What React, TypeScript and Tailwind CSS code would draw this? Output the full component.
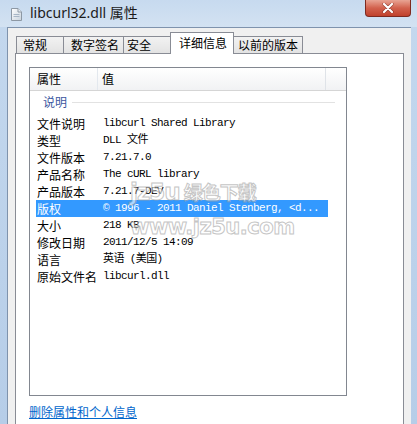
import React from "react";

const cjk = "font-['Noto_Sans_CJK_SC','Noto_Sans',sans-serif]";
const mono = "font-['Liberation_Mono','Noto_Sans_CJK_SC',monospace]";

const rows: { label: string; value: string }[] = [
  { label: "文件说明", value: "libcurl Shared Library" },
  { label: "类型", value: "DLL 文件" },
  { label: "文件版本", value: "7.21.7.0" },
  { label: "产品名称", value: "The cURL library" },
  { label: "产品版本", value: "7.21.7-DEV" },
  { label: "版权", value: "© 1996 - 2011 Daniel Stenberg, <d..." },
  { label: "大小", value: "218 KB" },
  { label: "修改日期", value: "2011/12/5 14:09" },
  { label: "语言", value: "英语 (美国)" },
  { label: "原始文件名", value: "libcurl.dll" },
];

const tabs = [
  { label: "常规", w: "w-[48px]", pl: "pl-[6px]" },
  { label: "数字签名", w: "w-[61px]", pl: "pl-[7px]" },
  { label: "安全", w: "w-[48px]", pl: "pl-[3px]" },
  { label: "详细信息", w: "w-[64px]", pl: "pl-[8px]", active: true },
  { label: "以前的版本", w: "w-[70px]", pl: "pl-[4px]" },
];

function FileIcon() {
  return (
    <svg width="11" height="13" viewBox="0 0 11 13">
      <defs>
        <linearGradient id="pg" x1="0" y1="0" x2="1" y2="1">
          <stop offset="0" stopColor="#ffffff" />
          <stop offset="1" stopColor="#c9d3dd" />
        </linearGradient>
      </defs>
      <path d="M0.5 0.5 H7 L10.5 4 V12.5 H0.5 Z" fill="url(#pg)" stroke="#8d98a4" />
      <path d="M7 0.5 V4 H10.5" fill="#e8edf2" stroke="#8d98a4" />
      <rect x="2.5" y="6" width="6" height="1" fill="#a8b6c6" />
      <rect x="2.5" y="8" width="6" height="1" fill="#a8b6c6" />
    </svg>
  );
}

export default function App() {
  return (
    <div className="relative w-[417px] h-[424px] overflow-hidden bg-gradient-to-b from-[#c4d8ee] to-[#b6cde8]">
      {/* Title bar */}
      <div className="flex items-start h-[27px] bg-gradient-to-b from-[#c7daef] to-[#d3e2f2]">
        <div className="ml-[11px] mt-[8px]">
          <FileIcon />
        </div>
        <div className="ml-[8px] mt-[3px] text-[14px] leading-[20px] text-[#1b1b1b] font-['Noto_Sans','Noto_Sans_CJK_SC',sans-serif]">
          libcurl32.dll 属性
        </div>
        <div className="ml-auto mr-[6px] w-[46px] h-[17px] rounded-b-[4px] border border-t-0 border-[#7d2a20] bg-gradient-to-b from-[#e8a494] via-[#d2614d] to-[#c0412c] flex items-center justify-center">
          <svg width="12" height="10" viewBox="0 0 12 10">
            <path d="M2 1 L10 9 M10 1 L2 9" stroke="#5a1810" strokeWidth="3.4" strokeLinecap="round" opacity="0.5" />
            <path d="M2 1 L10 9 M10 1 L2 9" stroke="#ffffff" strokeWidth="2.2" strokeLinecap="round" />
          </svg>
        </div>
      </div>

      {/* Client area */}
      <div className="ml-[7px] mr-[6px] h-[397px] border-l border-t border-[#7f93ad] bg-[#f0f0f0]">
        {/* Tabs */}
        <div className={`flex items-end h-[25px] pl-[8px] ${cjk} text-[12px] text-black`}>
          {tabs.map((t) =>
            t.active ? (
              <div
                key={t.label}
                className={`${t.w} ${t.pl} -ml-[1px] h-[22px] -mb-[1px] relative z-10 border border-b-0 border-[#898c95] bg-white leading-[19px]`}
              >
                {t.label}
              </div>
            ) : (
              <div
                key={t.label}
                className={`${t.w} ${t.pl} -ml-[1px] first:ml-0 h-[17px] border border-b-0 border-[#898c95] bg-gradient-to-b from-[#f2f2f2] to-[#e3e3e3] leading-[16px]`}
              >
                {t.label}
              </div>
            )
          )}
        </div>

        {/* Tab page */}
        <div className="ml-[7px] w-[389px] h-[380px] border border-[#898c95] bg-white pt-[13px] pl-[13px]">
          <div className="relative w-[318px] h-[329px] border border-[#828790] bg-white">
            {/* Header */}
            <div className={`flex h-[23px] bg-gradient-to-b from-white to-[#f1f2f4] border-b border-[#d5d5d5] ${cjk} text-[12px] text-black leading-[22px]`}>
              <div className="w-[68px] pl-[7px] border-r border-[#e3e8ee]">属性</div>
              <div className="w-[228px] pl-[4px] border-r border-[#dfe3e8]">值</div>
            </div>

            {/* Group */}
            <div className="flex items-center h-[20px] mt-[1px] pl-[13px] pr-[11px]">
              <span className={`${cjk} text-[12px] text-[#3a56a0]`}>说明</span>
              <div className="flex-1 ml-[5px] h-px bg-[#e2e2e2]" />
            </div>

            {/* Rows */}
            <div className="mt-[3px] flex flex-col">
              {rows.map((r) => {
                const sel = r.label === "版权";
                return (
                  <div
                    key={r.label}
                    className={`flex items-center h-[17px] ml-[6px] w-[292px] ${sel ? "bg-[#3399ff] text-white" : "text-black"}`}
                  >
                    <div className={`w-[67px] pl-[1px] ${cjk} text-[12px] leading-[17px]`}>{r.label}</div>
                    <div className={`${mono} text-[11px] tracking-[-0.6px] leading-[17px] whitespace-nowrap`}>
                      {r.value}
                    </div>
                  </div>
                );
              })}
            </div>

            {/* watermark */}
            <div className="absolute left-[100px] top-[112px] pointer-events-none opacity-60 font-['DejaVu_Sans','Noto_Sans_CJK_SC',sans-serif] font-bold text-white [-webkit-text-stroke:1px_#a0a0a0]">
              <div className="flex items-end text-[23px] leading-[24px] tracking-[-1px]">
                <span>jz5u</span>
                <span className="ml-[4px] text-[19px] leading-[22px]">绿色下载</span>
              </div>
              <div className="mt-[12px] text-[21px] leading-[22px] tracking-[-0.5px]">www.jz5u.com</div>
            </div>
          </div>

          <div className={`mt-[8px] ${cjk} text-[12px] leading-[16px] text-[#0066cc] underline`}>
            删除属性和个人信息
          </div>
        </div>
      </div>
    </div>
  );
}
